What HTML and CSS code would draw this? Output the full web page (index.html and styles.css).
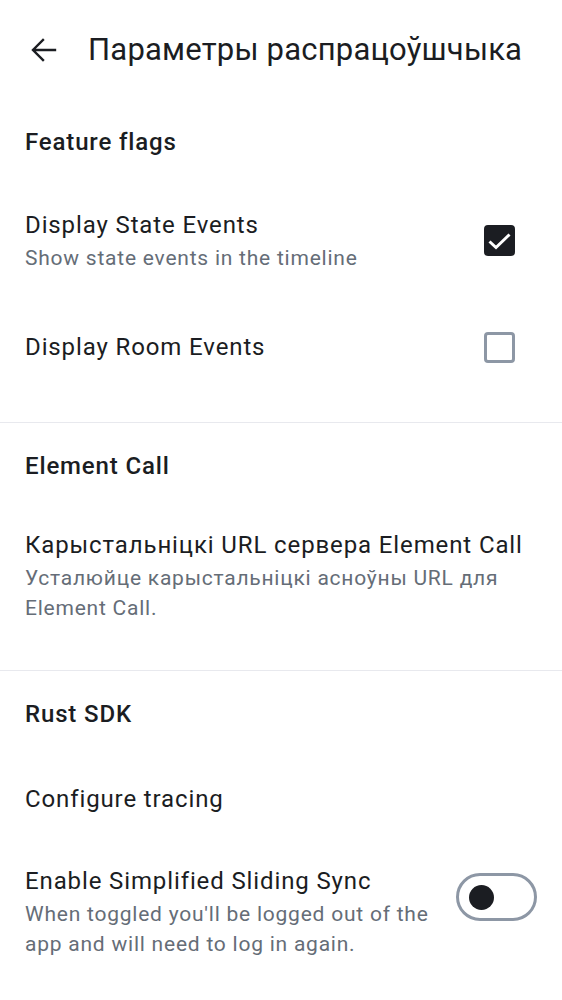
FILE: index.html
```html
<!DOCTYPE html>
<html>
<head>
<meta charset="utf-8">
<link rel="stylesheet" href="styles.css">
</head>
<body>
<div class="topbar">
  <svg class="back" width="28" height="28" viewBox="0 0 28 28"><path d="M25 14H3.5M13 4L3 14l10 10" fill="none" stroke="#1b1d22" stroke-width="2.4" stroke-linecap="square"/></svg>
  <div class="title">Параметры распрацоўшчыка</div>
</div>

<section class="section">
  <div class="sec-head">Feature flags</div>
  <div class="row row-two">
    <div class="text">
      <div class="item-title">Display State Events</div>
      <div class="item-sub">Show state events in the timeline</div>
    </div>
    <div class="checkbox checked">
      <svg width="31" height="31" viewBox="0 0 31 31"><path d="M5.5 16.5l6.5 6 13.5-13" fill="none" stroke="#fff" stroke-width="3"/></svg>
    </div>
  </div>
  <div class="row row-tall">
    <div class="text">
      <div class="item-title">Display Room Events</div>
    </div>
    <div class="checkbox"></div>
  </div>
</section>

<section class="section">
  <div class="sec-head">Element Call</div>
  <div class="row row-two row-tight">
    <div class="text">
      <div class="item-title">Карыстальніцкі URL сервера Element Call</div>
      <div class="item-sub">Усталюйце карыстальніцкі асноўны URL для Element Call.</div>
    </div>
  </div>
</section>

<section class="section last">
  <div class="sec-head">Rust SDK</div>
  <div class="row row-one">
    <div class="text">
      <div class="item-title">Configure tracing</div>
    </div>
  </div>
  <div class="row row-two row-top">
    <div class="text narrow">
      <div class="item-title">Enable Simplified Sliding Sync</div>
      <div class="item-sub">When toggled you'll be logged out of the app and will need to log in again.</div>
    </div>
    <div class="toggle"><div class="knob"></div></div>
  </div>
</section>
</body>
</html>
```

FILE: styles.css
```css
* { box-sizing: border-box; }
html, body { margin: 0; padding: 0; background: #fff; }
body {
  font-family: Roboto, "Noto Sans", sans-serif;
  color: #1b1d22;
  width: 562px;
}
.topbar {
  height: 99px;
  display: flex;
  align-items: center;
  padding-left: 30px;
}
.back { flex: none; }
.title {
  margin-left: 30px;
  font-size: 31px;
  line-height: 40px;
  letter-spacing: 0.2px;
  font-weight: 400;
}
.section {
  border-bottom: 1px solid #e8e9ee;
  padding-bottom: 23px;
}
.section.last { border-bottom: none; }
.sec-head {
  height: 86px;
  display: flex;
  align-items: center;
  padding: 0 25px;
  font-size: 24px;
  font-weight: 500;
  letter-spacing: 0.85px;
}
.row {
  display: flex;
  align-items: center;
  padding: 0 25px;
}
.row-two { padding-top: 22px; padding-bottom: 22px; }
.row-tight { padding-top: 18px; padding-bottom: 24px; }
.row-one { min-height: 84px; }
.row-tall { min-height: 104px; }
.row-top { align-items: flex-start; }
.text { flex: 1; min-width: 0; }
.text.narrow { padding-right: 24px; }
.item-title {
  font-size: 24px;
  line-height: 36px;
  letter-spacing: 0.88px;
}
.item-sub {
  font-size: 21px;
  line-height: 30px;
  letter-spacing: 0.77px;
  color: #656d77;
}
.checkbox {
  flex: none;
  width: 31px;
  height: 31px;
  border: 3px solid #8d97a5;
  border-radius: 4px;
  margin-right: 22px;
  position: relative;
}
.checkbox svg {
  position: absolute;
  left: -3px;
  top: -3px;
}
.checkbox.checked {
  background: #1b1d22;
  border-color: #1b1d22;
}
.toggle {
  flex: none;
  margin-top: 10px;
  width: 81px;
  height: 48px;
  border: 3px solid #8d97a5;
  border-radius: 24px;
  display: flex;
  align-items: center;
  padding-left: 10px;
}
.knob {
  width: 25px;
  height: 25px;
  border-radius: 50%;
  background: #1b1d22;
}
```
